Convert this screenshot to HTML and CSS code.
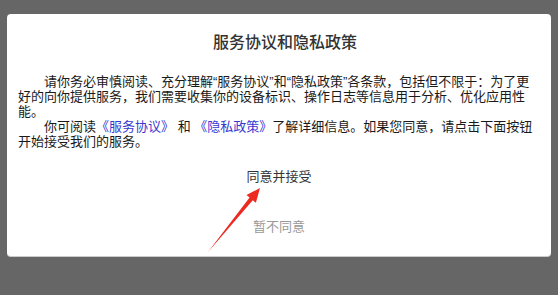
FILE: index.html
```html
<!DOCTYPE html>
<html lang="zh-CN">
<head>
    <meta charset="UTF-8">
    <meta name="viewport" content="width=device-width, initial-scale=1.0">
    <title>服务协议和隐私政策</title>
<link rel="stylesheet" href="styles.css">
</head>
<body>
<div id="wrap">
    <div class="dialog">
        <h3>服务协议和隐私政策</h3>
        <div class="content">
            <p>请你务必审慎阅读、充分理解“服务协议”和“隐私政策”各条款，包括但不限于：为了更好的向你提供服务，我们需要收集你的设备标识、操作日志等信息用于分析、优化应用性能。</p>
            <p>你可阅读<a href="#" class="link">《服务协议》</a> 和 <a href="#" class="link">《隐私政策》</a>了解详细信息。如果您同意，请点击下面按钮开始接受我们的服务。</p>
        </div>
        <button type="button" class="agree">同意并接受</button>
        <button type="button" class="refuse">暂不同意</button>
    </div>
    <!-- 빨간 화살표 -->
    <svg class="arrow" width="558" height="295" viewBox="0 0 558 295">
        <polygon points="208,252 249.6,197.6 246.5,195.1 260,188 255.9,202.7 252.8,200.2" fill="#ec2a22"/>
    </svg>
</div>
</body>
</html>
```
FILE: styles.css
```css
* {margin: 0; padding: 0;}
div, p, h3, a, button {box-sizing: border-box;}

body {background-color: #666; font-family: "Liberation Sans", "Noto Sans CJK SC", sans-serif;}

#wrap {width: 558px; height: 295px; position: relative; padding: 14px 7px 0;}

.dialog {background-color: #fff; border-radius: 4px; height: 243px; padding: 0 11px 6px;
    display: flex; flex-direction: column; border-bottom: 1px solid #ccc;}
.dialog h3 {font-size: 16px; line-height: 18px; font-weight: 500; color: #333; text-align: center;
    padding: 20px 0 0 12px; margin-bottom: 22px;}

.content {font-size: 13px; line-height: 15px; color: #1a1a1a; margin-bottom: 2px; text-spacing-trim: space-all;}
.content p {text-indent: 2em;}
.content .link {color: #3838d0; text-decoration: none;}

.dialog button {background: none; border: 0; font-family: inherit; font-size: 13px; height: 50px; cursor: pointer;}
.agree {color: #333;}
.refuse {color: #999;}

/* 화살표 */
.arrow {position: absolute; top: 0; left: 0; pointer-events: none;}
```
